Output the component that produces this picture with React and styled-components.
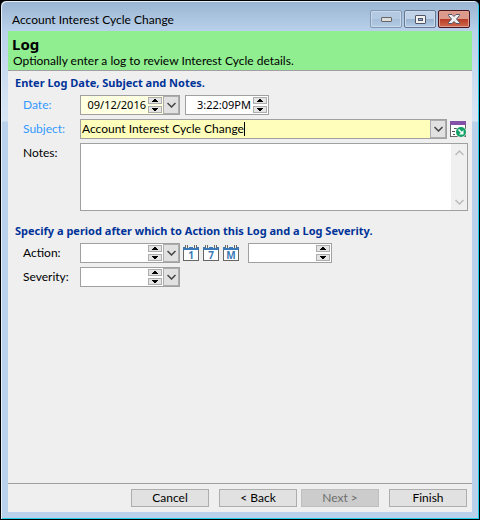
import React, { useState } from "react";
import styled, { createGlobalStyle } from "styled-components";

const GlobalStyle = createGlobalStyle`
  * {
    box-sizing: border-box;
  }
  body {
    margin: 0;
    background: #000;
    color: #000;
    font-family: Lato, "Open Sans", sans-serif;
    font-size: 12px;
    line-height: 16px;
  }
  button,
  input,
  textarea {
    font: inherit;
    color: inherit;
    margin: 0;
    padding: 0;
    border: 0;
    border-radius: 0;
    outline: 0;
  }
`;

function Chevron({ up, color = "#444" }) {
  return (
    <svg width="9" height="6" viewBox="0 0 9 6" fill="none" aria-hidden="true">
      <path
        d={up ? "M0.5 5 L4.5 1 L8.5 5" : "M0.5 1 L4.5 5 L8.5 1"}
        stroke={color}
        strokeWidth="1.5"
      />
    </svg>
  );
}

function Spinner({ name }) {
  return (
    <SpinnerBox>
      <SpinButton type="button" aria-label={`Increase ${name}`}>
        <svg width="6" height="3" viewBox="0 0 6 3">
          <path d="M2 0h2v1h1v1h1v1H0V2h1V1h1z" />
        </svg>
      </SpinButton>
      <SpinButton type="button" aria-label={`Decrease ${name}`}>
        <svg width="6" height="3" viewBox="0 0 6 3">
          <path d="M0 0h6v1H5v1H4v1H2V2H1V1H0z" />
        </svg>
      </SpinButton>
    </SpinnerBox>
  );
}

function DropButton({ label }) {
  return (
    <Drop type="button" aria-label={label}>
      <Chevron />
    </Drop>
  );
}

function CalendarButton({ label, mark }) {
  return (
    <IconButton type="button" aria-label={label}>
      <svg width="16" height="16" viewBox="0 0 16 16">
        <rect x="0.5" y="3.5" width="15" height="12" fill="#fff" stroke="#666" />
        <rect x="0" y="2" width="16" height="3" fill="#3a78b8" />
        <path d="M2 0h4v3H2zM10 0h4v3h-4z" fill="#efefef" />
        <path d="M2 0h1v3H2zM4 0h1v3H4zM11 0h1v3h-1zM13 0h1v3h-1z" fill="#666" />
        <text
          x="8"
          y="14"
          textAnchor="middle"
          fontFamily="Noto Sans, sans-serif"
          fontWeight="bold"
          fontSize="10"
          fill="#3a78b8"
        >
          {mark}
        </text>
      </svg>
    </IconButton>
  );
}

function LogIcon() {
  return (
    <svg width="16" height="16" viewBox="0 0 16 16">
      <rect x="0.5" y="0.5" width="15" height="15" fill="#fff" stroke="#666" />
      <rect width="16" height="4" fill="#8550a8" />
      <path d="M4 7.5h3M2 10.5h3M3 13.5h2" stroke="#555" />
      <circle cx="11" cy="11" r="5.5" fill="#efefef" />
      <circle cx="11" cy="11" r="5" fill="#12a266" />
      <path d="M8.5 8.5 L12.5 12.5" stroke="#fff" strokeWidth="1.6" />
      <path d="M13.5 9v4.5H9z" fill="#fff" />
    </svg>
  );
}

export default function App() {
  const [subject, setSubject] = useState("Account Interest Cycle Change");

  return (
    <>
      <GlobalStyle />
      <Window>
        <TitleBar>
          <Title>Account Interest Cycle Change</Title>
          <CaptionButton type="button" aria-label="Minimize" $dim>
            <svg width="11" height="5" viewBox="0 0 11 5">
              <rect x="0.5" y="0.5" width="10" height="4" rx="0.5" fill="#ddd" stroke="#666" />
            </svg>
          </CaptionButton>
          <CaptionButton type="button" aria-label="Maximize">
            <svg width="11" height="9" viewBox="0 0 11 9">
              <rect x="0.5" y="0.5" width="10" height="8" rx="0.5" fill="#f2f2f2" stroke="#535666" />
              <rect x="3.5" y="3.5" width="4" height="2" fill="#8fb0d2" stroke="#535666" />
            </svg>
          </CaptionButton>
          <CaptionButton type="button" aria-label="Close" $close>
            <svg width="12" height="10" viewBox="0 0 12 10">
              <path
                d="M0.5 0.5h3.5l2 2 2-2h3.5v1L8.5 5l3 3.5v1H8l-2-2-2 2H0.5v-1l3-3.5-3-3.5z"
                fill="#f0f0f0"
                stroke="#535666"
              />
            </svg>
          </CaptionButton>
        </TitleBar>

        <Client>
          <Banner>
            <BannerTitle>Log</BannerTitle>
            <BannerText>Optionally enter a log to review Interest Cycle details.</BannerText>
          </Banner>

          <Form>
            <Heading>Enter Log Date, Subject and Notes.</Heading>
            <Row>
              <Label htmlFor="date" $required>Date:</Label>
              <Field $bg="#ffffe1" $width={100}>
                <FieldInput id="date" defaultValue="09/12/2016" />
                <Spinner name="date" />
                <DropButton label="Pick date" />
              </Field>
              <TimeField $width={84}>
                <FieldInput aria-label="Time" defaultValue="3:22:09PM" />
                <Spinner name="time" />
              </TimeField>
            </Row>
            <Row>
              <Label htmlFor="subject" $required>Subject:</Label>
              <Field $bg="#ffffbb">
                <SubjectInput
                  id="subject"
                  value={subject}
                  onChange={(e) => setSubject(e.target.value)}
                />
                <Caret />
                <DropButton label="Choose subject" />
              </Field>
              <SubjectTools>
                <IconButton type="button" aria-label="Subject log">
                  <LogIcon />
                </IconButton>
              </SubjectTools>
            </Row>
            <Row $top>
              <Label htmlFor="notes">Notes:</Label>
              <NotesBox>
                <NotesInput id="notes" />
                <ScrollTrack>
                  <Chevron up color="#bbb" />
                  <Chevron color="#bbb" />
                </ScrollTrack>
              </NotesBox>
            </Row>

            <Heading $second>Specify a period after which to Action this Log and a Log Severity.</Heading>
            <Row>
              <Label htmlFor="action">Action:</Label>
              <Field $width={100}>
                <FieldInput id="action" />
                <Spinner name="action date" />
                <DropButton label="Pick action date" />
              </Field>
              <Periods>
                <CalendarButton label="One day" mark="1" />
                <CalendarButton label="Seven days" mark="7" />
                <CalendarButton label="One month" mark="M" />
              </Periods>
              <Field $width={84}>
                <FieldInput aria-label="Action time" />
                <Spinner name="action time" />
              </Field>
            </Row>
            <Row>
              <Label htmlFor="severity">Severity:</Label>
              <Field $width={100}>
                <FieldInput id="severity" />
                <Spinner name="severity" />
                <DropButton label="Choose severity" />
              </Field>
            </Row>
          </Form>

          <Footer>
            <PushButton type="button">Cancel</PushButton>
            <Steps>
              <PushButton type="button">&lt; Back</PushButton>
              <PushButton type="button" disabled>Next &gt;</PushButton>
            </Steps>
            <PushButton type="button">Finish</PushButton>
          </Footer>
        </Client>
      </Window>
    </>
  );
}

const Window = styled.div`
  min-height: 100vh;
  display: flex;
  flex-direction: column;
  padding: 1px 7px 7px;
  border: 1px solid #000;
  border-radius: 6px 6px 0 0;
  background: linear-gradient(#99b4d1, #b9d1ea 30px, #d4e3f3 100px, #d7e5f4 120px, #b9d1ea 121px);
  box-shadow: inset 1px 1px 0 #e6eef7, inset -1px -1px 0 #23cdea;
`;

const TitleBar = styled.header`
  display: flex;
  align-items: flex-start;
  gap: 2px;
  height: 29px;
  padding: 8px 2px 0 4px;
`;

const Title = styled.span`
  flex: 1;
  padding-top: 2px;
`;

const CaptionButton = styled.button`
  display: flex;
  align-items: center;
  justify-content: center;
  width: 32px;
  height: 18px;
  border: 1px solid ${(p) => (p.$close ? "#4a1420" : p.$dim ? "#8399b3" : "#66788f")};
  border-radius: 2px;
  box-shadow: inset 0 0 0 1px ${(p) => (p.$close ? "#e0a090" : "#c9daec")};
  background: ${(p) =>
    p.$close
      ? "linear-gradient(#dc9a8c 50%, #b83a24 50%, #cf6a4c)"
      : p.$dim
      ? "linear-gradient(#b4cae2 50%, #a6bed8 50%, #b4cbe4)"
      : "linear-gradient(#bfd2e8 50%, #98b3d0 50%, #b4cce6)"};
`;

const Client = styled.main`
  flex: 1;
  display: flex;
  flex-direction: column;
  background: #efefef;
`;

const Banner = styled.div`
  height: 40px;
  padding: 4px;
  background: #90ee90;
  border-bottom: 1px solid #a0a0a0;
`;

const BannerTitle = styled.h1`
  margin: 0;
  font-family: "Noto Sans", sans-serif;
  font-size: 15px;
  line-height: 18px;
`;

const BannerText = styled.p`
  margin: 0;
  padding-left: 1px;
`;

const Form = styled.form`
  flex: 1;
  display: flex;
  flex-direction: column;
  gap: 4px;
  padding: 4px 4px 0 7px;
`;

const Heading = styled.h2`
  margin: ${(p) => (p.$second ? "8px 0 0" : "0")};
  font-family: "Noto Sans", sans-serif;
  font-size: 11px;
  line-height: 16px;
  color: #003399;
`;

const Row = styled.div`
  display: flex;
  align-items: ${(p) => (p.$top ? "flex-start" : "center")};
`;

const Label = styled.label`
  flex: 0 0 65px;
  padding-left: 8px;
  line-height: 20px;
  color: ${(p) => (p.$required ? "#3399ff" : "#000")};
`;

const Field = styled.div`
  display: flex;
  align-items: stretch;
  flex: ${(p) => (p.$width ? `0 0 ${p.$width}px` : "1")};
  min-width: 0;
  height: 20px;
  border: 1px solid #a0a0a0;
  background: ${(p) => p.$bg || "#fff"};
`;

const TimeField = styled(Field)`
  margin-left: 5px;
`;

const FieldInput = styled.input`
  flex: 1;
  min-width: 0;
  padding-right: 1px;
  background: transparent;
  font-family: "Noto Sans", sans-serif;
  font-size: 11px;
  text-align: right;
`;

const SubjectInput = styled.input`
  field-sizing: content;
  min-width: 0;
  padding-left: 1px;
  background: transparent;
  caret-color: transparent;
`;

const Caret = styled.span`
  width: 1px;
  margin: 2px auto 2px 0;
  background: #000;
`;

const SpinnerBox = styled.div`
  display: flex;
  flex-direction: column;
  justify-content: space-between;
  padding: 1px;
  width: 16px;
`;

const SpinButton = styled.button`
  display: flex;
  align-items: center;
  justify-content: center;
  height: 7px;
  border: 1px solid #adadad;
  background: #e4e4e4;
`;

const Drop = styled.button`
  display: flex;
  align-items: center;
  justify-content: center;
  width: 16px;
  border: 1px solid #adadad;
  background: #e1e1e1;
`;

const IconButton = styled.button`
  display: flex;
  width: 16px;
  background: transparent;
`;

const SubjectTools = styled.div`
  padding: 0 2px 0 3px;
`;

const Periods = styled.div`
  display: flex;
  gap: 4px;
  padding: 0 9px 0 3px;
`;

const NotesBox = styled.div`
  flex: 1;
  display: flex;
  height: 68px;
  border: 1px solid #a0a0a0;
  background: #fff;
`;

const NotesInput = styled.textarea`
  flex: 1;
  min-width: 0;
  padding: 1px 2px;
  resize: none;
  background: transparent;
`;

const ScrollTrack = styled.div`
  display: flex;
  flex-direction: column;
  align-items: center;
  justify-content: space-between;
  width: 16px;
  padding: 6px 0 5px;
  background: #f0f0f0;
`;

const Footer = styled.footer`
  display: flex;
  justify-content: flex-end;
  gap: 10px;
  padding: 5px;
  border-top: 1px solid #a0a0a0;
`;

const Steps = styled.div`
  display: flex;
  gap: 4px;
`;

const PushButton = styled.button`
  width: 78px;
  height: 18px;
  border: 1px solid #adadad;
  background: #e1e1e1;
  line-height: 16px;
  &:disabled {
    border-color: #bfbfbf;
    background: #cccccc;
    color: #6d6d6d;
  }
`;
